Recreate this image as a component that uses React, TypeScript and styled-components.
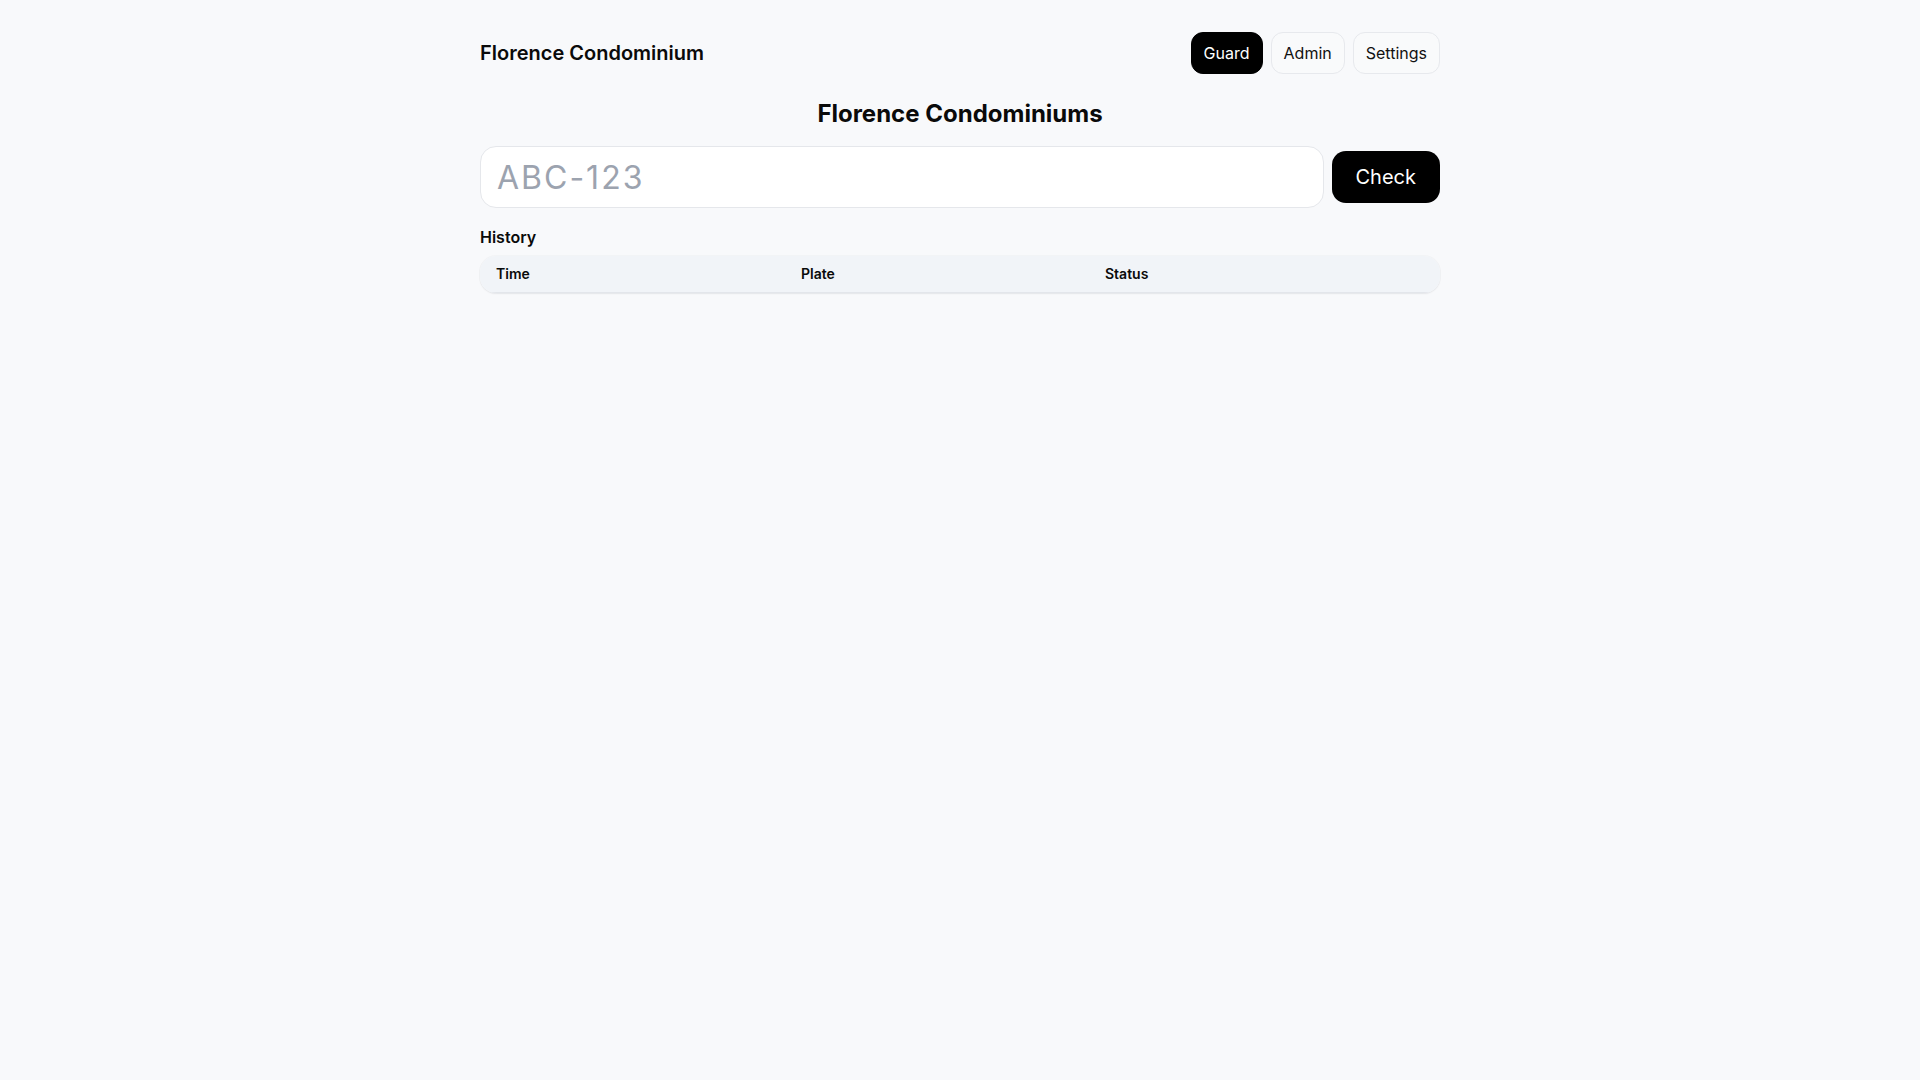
import React from "react";
import styled, { createGlobalStyle } from "styled-components";

const GlobalStyle = createGlobalStyle`
  html, body {
    margin: 0;
    padding: 0;
    background: #f8f9fb;
    font-family: Inter, "Noto Sans", "Liberation Sans", sans-serif;
    color: #0a0a0a;
  }
  * { box-sizing: border-box; }
`;

const Page = styled.div`
  max-width: 960px;
  margin: 0 auto;
  padding: 32px 0 40px;
`;

const Header = styled.header`
  display: flex;
  align-items: center;
  justify-content: space-between;
  height: 42px;
  margin-bottom: 24px;
`;

const Brand = styled.div`
  font-size: 20px;
  line-height: 28px;
  font-weight: 600;
  color: #0a0a0a;
`;

const Nav = styled.nav`
  display: flex;
  gap: 8px;
`;

const NavButton = styled.button<{ $active?: boolean }>`
  font-family: inherit;
  font-size: 16px;
  line-height: 24px;
  font-weight: 400;
  padding: 8px 12px;
  border-radius: 12px;
  border: 1px solid ${(p) => (p.$active ? "#000" : "#e7e9ed")};
  background: ${(p) => (p.$active ? "#000" : "#f9fafb")};
  color: ${(p) => (p.$active ? "#fff" : "#111")};
  cursor: pointer;
`;

const Title = styled.h1`
  margin: 0 0 16px;
  text-align: center;
  font-size: 24px;
  line-height: 32px;
  font-weight: 700;
  color: #0a0a0a;
`;

const CheckRow = styled.div`
  display: flex;
  align-items: center;
  gap: 8px;
`;

const PlateInput = styled.input`
  flex: 1;
  height: 62px;
  padding: 0 16px;
  border: 1px solid #e5e7eb;
  border-radius: 16px;
  background: #fff;
  font-family: inherit;
  font-size: 32px;
  letter-spacing: 2px;
  color: #111;
  outline: none;
  &::placeholder {
    color: #9ca3af;
  }
`;

const CheckButton = styled.button`
  height: 52px;
  padding: 0 24px;
  border: none;
  border-radius: 14px;
  background: #000;
  color: #fff;
  font-family: inherit;
  font-size: 20px;
  line-height: 28px;
  font-weight: 400;
  cursor: pointer;
`;

const SectionLabel = styled.h2`
  margin: 17px 0 7px;
  font-size: 16px;
  line-height: 24px;
  font-weight: 600;
  color: #0a0a0a;
`;

const TableCard = styled.div`
  border-radius: 16px;
  overflow: hidden;
  box-shadow: 0 1px 2px rgba(16, 24, 40, 0.06), 0 0 0 1px rgba(16, 24, 40, 0.025);
`;

const HeadRow = styled.div`
  display: grid;
  grid-template-columns: 305px 304px 1fr;
  height: 37px;
  align-items: center;
  background: #f1f4f8;
  border-bottom: 1px solid #e3e6eb;
`;

const HeadCell = styled.div`
  padding: 0 16px;
  font-size: 14px;
  line-height: 20px;
  font-weight: 600;
  color: #0a0a0a;
`;

export default function App() {
  return (
    <>
      <GlobalStyle />
      <Page>
        <Header>
          <Brand>Florence Condominium</Brand>
          <Nav>
            <NavButton $active>Guard</NavButton>
            <NavButton>Admin</NavButton>
            <NavButton>Settings</NavButton>
          </Nav>
        </Header>
        <Title>Florence Condominiums</Title>
        <CheckRow>
          <PlateInput placeholder="ABC-123" />
          <CheckButton>Check</CheckButton>
        </CheckRow>
        <SectionLabel>History</SectionLabel>
        <TableCard>
          <HeadRow>
            <HeadCell>Time</HeadCell>
            <HeadCell>Plate</HeadCell>
            <HeadCell>Status</HeadCell>
          </HeadRow>
        </TableCard>
      </Page>
    </>
  );
}
